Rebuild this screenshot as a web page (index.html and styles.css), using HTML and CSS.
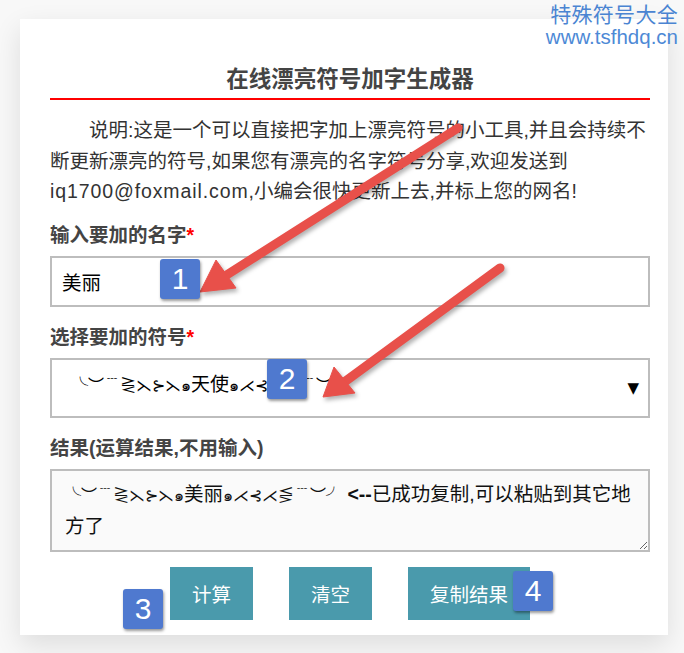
FILE: index.html
```html
<!DOCTYPE html>
<html lang="zh-CN">
<head>
<meta charset="utf-8">
<title>在线漂亮符号加字生成器</title>
<link rel="stylesheet" href="styles.css">
</head>
<body>
<div class="page">
  <div class="brand">
    <div class="brand-name">特殊符号大全</div>
    <div class="brand-url">www.tsfhdq.cn</div>
  </div>
  <main class="card">
    <h1 class="title">在线漂亮符号加字生成器</h1>
    <p class="intro">说明:这是一个可以直接把字加上漂亮符号的小工具,并且会持续不断更新漂亮的符号,如果您有漂亮的名字符号分享,欢迎发送到<span class="mail">iq1700@foxmail.com</span>,小编会很快更新上去,并标上您的网名!</p>
    <div class="field">
      <label class="label">输入要加的名字<span class="req">*</span></label>
      <div class="input">美丽</div>
    </div>
    <div class="field">
      <label class="label">选择要加的符号<span class="req">*</span></label>
      <div class="select">
        <span class="select-text"><span class="sym">╰︶﹉⋛⋋⊱⋋๑</span>天使<span class="sym">๑⋌⊰⋌⋚﹉︶╯</span></span>
        <span class="caret">▼</span>
      </div>
    </div>
    <div class="field">
      <label class="label">结果(运算结果,不用输入)</label>
      <div class="result"><span class="sym">╰︶﹉⋛⋋⊱⋋๑</span>美丽<span class="sym">๑⋌⊰⋌⋚﹉︶╯</span> <b>&lt;--</b>已成功复制,可以粘贴到其它地方了</div>
    </div>
    <div class="actions">
      <button class="btn">计算</button>
      <button class="btn">清空</button>
      <button class="btn">复制结果</button>
    </div>
  </main>

  <svg class="arrows" width="684" height="653" viewBox="0 0 684 653">
    <g fill="#e8504a" stroke="#e8504a">
      <line x1="458" y1="128" x2="225" y2="276" stroke-width="9" stroke-linecap="round"/>
      <polygon points="200,292 216,260 236,288" stroke-width="1" stroke-linejoin="round"/>
      <line x1="500" y1="268" x2="343" y2="383" stroke-width="9" stroke-linecap="round"/>
      <polygon points="323,397 334,367 355,393" stroke-width="1" stroke-linejoin="round"/>
    </g>
  </svg>
  <div class="badge b1">1</div>
  <div class="badge b2">2</div>
  <div class="badge b3">3</div>
  <div class="badge b4">4</div>
</div>
</body>
</html>
```
FILE: styles.css
```css
* { box-sizing: border-box; }
html, body { margin: 0; padding: 0; }
body {
  background: #f8f8f8;
  font-family: "Liberation Sans", "Noto Sans CJK SC", sans-serif;
  color: #333;
}
.page {
  position: relative;
  width: 684px;
  height: 653px;
  overflow: hidden;
  padding-top: 19px;
}
.card {
  width: 648px;
  margin-left: 20px;
  background: #fff;
  padding: 46px 18px 15px 30px;
  box-shadow: 0 10px 26px rgba(0,0,0,0.11);
}
.title {
  margin: 0;
  font-size: 22.5px;
  line-height: 30px;
  font-weight: 700;
  color: #444;
  text-align: center;
  padding-bottom: 3px;
  border-bottom: 2px solid #f00;
  width: 600px;
}
.intro {
  width: 600px;
  margin: 15px 0 13px;
  font-size: 19.5px;
  line-height: 30.5px;
  text-indent: 2em;
  color: #333;
}
.mail { letter-spacing: 0.9px; }
.field { width: 600px; display: flex; flex-direction: column; gap: 6px; }
.field + .field { margin-top: 15px; }
.label {
  font-size: 19.5px;
  line-height: 30px;
  font-weight: 700;
  color: #444;
}
.req { color: #f00; }
.input {
  height: 51px;
  border: 2px solid #bdbdbd;
  padding: 0 10px;
  display: flex;
  align-items: center;
  font-size: 19.5px;
  color: #000;
}
.select {
  height: 60px;
  border: 2px solid #bdbdbd;
  padding: 0 9px 0 20px;
  display: flex;
  align-items: center;
  justify-content: space-between;
  font-size: 19px;
  color: #000;
}
.select-text { padding-bottom: 8px; }
.sym { font-size: 16px; }
.caret { font-size: 15px; font-family: "DejaVu Sans", sans-serif; }
.result {
  height: 83px;
  border: 2px solid #bdbdbd;
  background: #fafafa;
  padding: 8px 14px 8px 13px;
  font-size: 19.5px;
  line-height: 30px;
  color: #111;
  resize: vertical;
  overflow: auto;
}
.result b { font-weight: 700; }
.actions {
  width: 600px;
  display: flex;
  justify-content: center;
  gap: 36px;
  margin-top: 15px;
}
.btn {
  height: 53px;
  padding: 0 22px;
  border: 0;
  background: #4a9aac;
  color: #fff;
  font-family: "Liberation Sans", "Noto Sans CJK SC", sans-serif;
  font-size: 19.5px;
}
.brand {
  position: absolute;
  top: 1px;
  right: 6px;
  text-align: right;
  color: #4a84d2;
}
.brand-name {
  font-size: 21px;
  line-height: 24px;
  letter-spacing: 0.3px;
  font-family: "Noto Sans CJK SC", sans-serif;
  font-weight: 400;
}
.brand-url {
  font-size: 20.5px;
  line-height: 24px;
  color: #4d89d6;
  font-family: "Liberation Sans", sans-serif;
}
.arrows {
  position: absolute;
  top: 0;
  left: 0;
  pointer-events: none;
  filter: drop-shadow(2px 3px 2px rgba(0,0,0,0.3));
}
.badge {
  position: absolute;
  width: 40px;
  height: 40px;
  background: #4f79cf;
  color: #fff;
  border-radius: 3px;
  display: flex;
  align-items: center;
  justify-content: center;
  font-family: "Liberation Sans Narrow", "Liberation Sans", sans-serif;
  font-size: 30px;
  box-shadow: 1px 2px 3px rgba(0,0,0,0.4);
}
.b1 { left: 160px; top: 259px; }
.b2 { left: 267px; top: 359px; }
.b3 { left: 123px; top: 589px; }
.b4 { left: 513px; top: 571px; }
```
